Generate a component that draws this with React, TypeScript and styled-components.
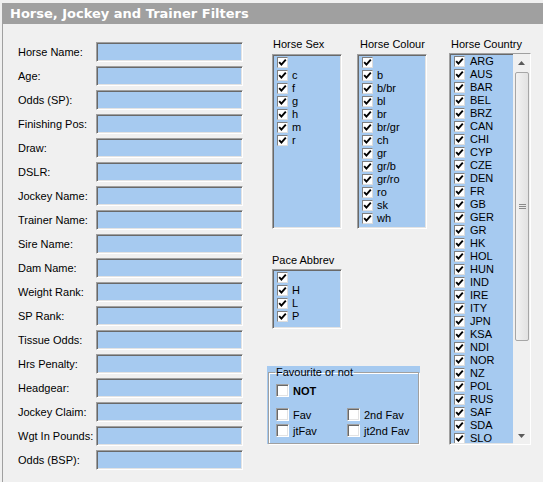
import React from 'react';
import styled, { createGlobalStyle } from 'styled-components';

const GlobalStyle = createGlobalStyle`
  html, body { margin: 0; padding: 0; background: #f0f0f0; }
  body { font-family: "Liberation Sans", Arial, sans-serif; font-size: 11px; color: #000; }
  * { box-sizing: border-box; }
`;

const BLUE = '#a6caf0';

const Panel = styled.div`
  width: 541px;
  height: 479px;
  margin: 3px 0 0 2px;
  border-left: 1px solid #a0a0a0;
  display: flex;
  flex-direction: column;
  overflow: hidden;
`;

const TitleBar = styled.div`
  height: 21px;
  background: #a0a0a0;
  color: #fff;
  font-family: "DejaVu Sans", Verdana, sans-serif;
  font-weight: bold;
  font-size: 13px;
  display: flex;
  align-items: center;
  padding-left: 7px;
`;

const Body = styled.div`
  display: flex;
  align-items: flex-start;
  padding: 14px 0 0 15px;
`;

const Form = styled.div`
  display: grid;
  grid-template-columns: 78px 147px;
  grid-auto-rows: 20px;
  row-gap: 4px;
  align-items: center;
  margin-top: 4px;
`;

const FieldLabel = styled.label`
  white-space: nowrap;
  font-size: 11px;
`;

const TextField = styled.div`
  height: 20px;
  background: ${BLUE};
  border-style: solid;
  border-width: 1px;
  border-color: #a0a0a0 #fff #fff #a0a0a0;
  box-shadow: inset 1px 1px 0 #696969, inset -1px -1px 0 #e3e3e3;
`;

const Middle = styled.div`
  display: flex;
  flex-direction: column;
  width: 160px;
  margin-left: 24px;
`;

const TopRow = styled.div`
  display: flex;
  gap: 15px;
  padding-left: 5px;
`;

const Group = styled.div<{ $w: number }>`
  display: flex;
  flex-direction: column;
  width: ${(p) => p.$w}px;
`;

const GroupLabel = styled.div<{ $inset: number; $gap?: number }>`
  height: 13px;
  line-height: 13px;
  white-space: nowrap;
  padding-left: ${(p) => p.$inset}px;
  margin-bottom: ${(p) => p.$gap ?? 3}px;
`;

const ListBox = styled.div<{ $h: number }>`
  height: ${(p) => p.$h}px;
  background: ${BLUE};
  border-style: solid;
  border-width: 1px;
  border-color: #a0a0a0 #fff #fff #a0a0a0;
  box-shadow: inset 1px 1px 0 #696969, inset -1px -1px 0 #e3e3e3;
  padding: 1px 1px 1px 4px;
  overflow: hidden;
  display: flex;
`;

const Items = styled.div`
  flex: 1;
  display: flex;
  flex-direction: column;
  overflow: hidden;
`;

const Item = styled.div<{ $gap: number }>`
  height: 13px;
  display: flex;
  align-items: center;
  gap: ${(p) => p.$gap}px;
  white-space: nowrap;
  line-height: 13px;
`;

const SmallCheck = styled.span`
  width: 11px;
  height: 11px;
  flex: none;
  background: #fff;
  border: 1px solid;
  border-color: #808080 #dcdcdc #dcdcdc #808080;
  display: flex;
  align-items: center;
  justify-content: center;
`;

const Tick = () => (
  <svg width="9" height="9" viewBox="0 0 9 9">
    <path d="M1.2 4.2 L3.4 6.6 L7.8 1.6" fill="none" stroke="#000" strokeWidth="1.9" />
  </svg>
);

const PaceGroup = styled(Group)`
  margin-top: 25px;
  margin-left: 5px;
`;

const FavBox = styled.div`
  margin-top: 37px;
  width: 153px;
  height: 78px;
  background: ${BLUE};
  padding: 0 1px 0 1px;
`;

const FavFieldset = styled.fieldset`
  margin: 0;
  padding: 0 0 0 7px;
  height: 100%;
  border: 1px solid #a0a0a0;
  box-shadow: 1px 1px 0 #fff, inset 1px 1px 0 #fff;
  min-inline-size: 0;
`;

const FavLegend = styled.legend`
  margin-left: -1px;
  padding: 0 1px;
  line-height: 13px;
  font-size: 11px;
`;

const NotRow = styled.div`
  margin-top: 5px;
  height: 13px;
`;

const FavGrid = styled.div`
  display: grid;
  grid-template-columns: 71px auto;
  grid-auto-rows: 13px;
  row-gap: 3px;
  margin-top: 11px;
`;

const Option = styled.div<{ $bold?: boolean }>`
  display: flex;
  align-items: center;
  gap: 4px;
  height: 13px;
  white-space: nowrap;
  font-weight: ${(p) => (p.$bold ? 'bold' : 'normal')};
`;

const BigCheck = styled.span`
  width: 13px;
  height: 13px;
  flex: none;
  background: #fff;
  border: 1px solid;
  border-color: #a0a0a0 #fff #fff #a0a0a0;
  box-shadow: inset 1px 1px 0 #696969, inset -1px -1px 0 #e3e3e3;
`;

const CountryGroup = styled(Group)`
  margin-left: 22px;
`;

const ScrollBar = styled.div`
  width: 17px;
  flex: none;
  margin: -1px -1px -1px 0;
  background: #f0f0f0;
  display: flex;
  flex-direction: column;
`;

const ScrollButton = styled.div`
  height: 17px;
  flex: none;
  display: flex;
  align-items: center;
  justify-content: center;
`;

const Thumb = styled.div`
  height: 269px;
  margin: 1px 1px 0 2px;
  border: 1px solid #a6a6a6;
  border-radius: 2px;
  background: linear-gradient(to right, #f2f2f2, #e2e2e2);
  display: flex;
  flex-direction: column;
  align-items: center;
  justify-content: center;
  gap: 1px;
`;

const Grip = styled.span`
  width: 7px;
  height: 1px;
  background: #8a8a8a;
`;

const Track = styled.div`
  flex: 1;
`;

const Arrow = ({ down }: { down?: boolean }) => (
  <svg width="7" height="4" viewBox="0 0 7 4">
    <path d={down ? 'M0 0 L7 0 L3.5 4 Z' : 'M0 4 L7 4 L3.5 0 Z'} fill="#5a5a5a" />
  </svg>
);

const fields = [
  'Horse Name:', 'Age:', 'Odds (SP):', 'Finishing Pos:', 'Draw:', 'DSLR:', 'Jockey Name:',
  'Trainer Name:', 'Sire Name:', 'Dam Name:', 'Weight Rank:', 'SP Rank:', 'Tissue Odds:',
  'Hrs Penalty:', 'Headgear:', 'Jockey Claim:', 'Wgt In Pounds:', 'Odds (BSP):',
];

const sexes = ['', 'c', 'f', 'g', 'h', 'm', 'r'];
const colours = ['', 'b', 'b/br', 'bl', 'br', 'br/gr', 'ch', 'gr', 'gr/b', 'gr/ro', 'ro', 'sk', 'wh'];
const paces = ['', 'H', 'L', 'P'];
const countries = [
  'ARG', 'AUS', 'BAR', 'BEL', 'BRZ', 'CAN', 'CHI', 'CYP', 'CZE', 'DEN', 'FR', 'GB', 'GER', 'GR',
  'HK', 'HOL', 'HUN', 'IND', 'IRE', 'ITY', 'JPN', 'KSA', 'NDI', 'NOR', 'NZ', 'POL', 'RUS', 'SAF',
  'SDA', 'SLO',
];

const CheckList = ({ items, gap }: { items: string[]; gap: number }) => (
  <Items>
    {items.map((t, i) => (
      <Item key={i} $gap={gap}>
        <SmallCheck><Tick /></SmallCheck>
        <span>{t}</span>
      </Item>
    ))}
  </Items>
);

export default function App() {
  return (
    <>
      <GlobalStyle />
      <Panel>
        <TitleBar>Horse, Jockey and Trainer Filters</TitleBar>
        <Body>
          <Form>
            {fields.map((f) => (
              <React.Fragment key={f}>
                <FieldLabel>{f}</FieldLabel>
                <TextField />
              </React.Fragment>
            ))}
          </Form>
          <Middle>
            <TopRow>
              <Group $w={70}>
                <GroupLabel $inset={1}>Horse Sex</GroupLabel>
                <ListBox $h={175}>
                  <CheckList items={sexes} gap={4} />
                </ListBox>
              </Group>
              <Group $w={70}>
                <GroupLabel $inset={3}>Horse Colour</GroupLabel>
                <ListBox $h={175}>
                  <CheckList items={colours} gap={4} />
                </ListBox>
              </Group>
            </TopRow>
            <PaceGroup $w={70}>
              <GroupLabel $inset={0} $gap={2}>Pace Abbrev</GroupLabel>
              <ListBox $h={60}>
                <CheckList items={paces} gap={4} />
              </ListBox>
            </PaceGroup>
            <FavBox>
              <FavFieldset>
                <FavLegend>Favourite or not</FavLegend>
                <NotRow>
                  <Option $bold><BigCheck /><span>NOT</span></Option>
                </NotRow>
                <FavGrid>
                  <Option><BigCheck /><span>Fav</span></Option>
                  <Option><BigCheck /><span>2nd Fav</span></Option>
                  <Option><BigCheck /><span>jtFav</span></Option>
                  <Option><BigCheck /><span>jt2nd Fav</span></Option>
                </FavGrid>
              </FavFieldset>
            </FavBox>
          </Middle>
          <CountryGroup $w={82}>
            <GroupLabel $inset={2} $gap={2}>Horse Country</GroupLabel>
            <ListBox $h={392}>
              <CheckList items={countries} gap={5} />
              <ScrollBar>
                <ScrollButton><Arrow /></ScrollButton>
                <Thumb><Grip /><Grip /><Grip /></Thumb>
                <Track />
                <ScrollButton><Arrow down /></ScrollButton>
              </ScrollBar>
            </ListBox>
          </CountryGroup>
        </Body>
      </Panel>
    </>
  );
}
